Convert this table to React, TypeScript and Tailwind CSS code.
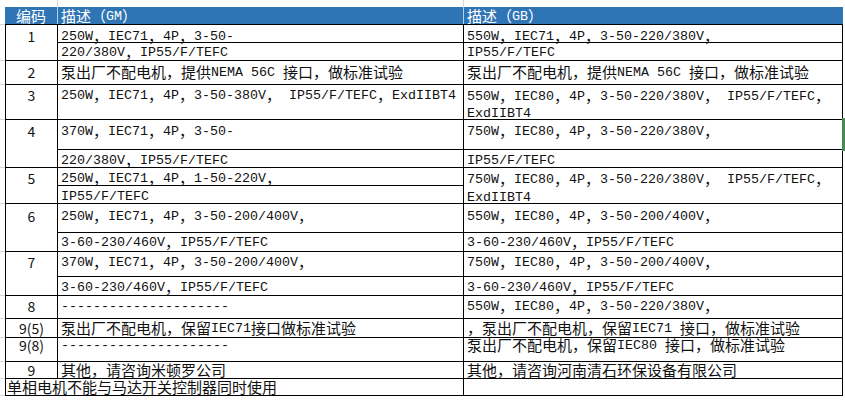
import React from "react";

// SimSun-like mix: CJK glyphs 15px wide, latin half-width (8px advance)
function Mixed({ text }: { text: string }) {
  const parts = text.split(/([\x20-\x7e]+)/);
  return (
    <>
      {parts.map((p, i) =>
        /^[\x20-\x7e]+$/.test(p) ? (
          <span
            key={i}
            className="align-[2px] font-['Liberation_Mono',monospace] text-[13.33px] leading-none whitespace-pre"
          >
            {p}
          </span>
        ) : (
          <span key={i}>{p}</span>
        )
      )}
    </>
  );
}

type Row = {
  no: string;
  h: string;
  pt: string;
  left: string[];
  right: string[];
  splitL?: string;
  splitR?: string;
  pt2?: string;
  lh?: string;
};

const dash = "---------------------";

const rows: Row[] = [
  {
    no: "1",
    h: "h-[36px]",
    pt: "pt-[3px]",
    left: ["250W，IEC71，4P，3-50-", "220/380V，IP55/F/TEFC"],
    right: ["550W，IEC71，4P，3-50-220/380V，", "IP55/F/TEFC"],
    splitL: "h-[18px]",
    splitR: "h-[18px]",
    pt2: "pt-px",
  },
  {
    no: "2",
    h: "h-[24px]",
    pt: "pt-[3px]",
    left: ["泵出厂不配电机，提供NEMA 56C 接口，做标准试验"],
    right: ["泵出厂不配电机，提供NEMA 56C 接口，做标准试验"],
  },
  {
    no: "3",
    h: "h-[35px]",
    pt: "pt-[2px]",
    left: ["250W，IEC71，4P，3-50-380V， IP55/F/TEFC，ExdIIBT4"],
    right: ["550W，IEC80，4P，3-50-220/380V， IP55/F/TEFC，", "ExdIIBT4"],
    lh: "leading-[17px]",
  },
  {
    no: "4",
    h: "h-[48px]",
    pt: "pt-[3px]",
    left: ["370W，IEC71，4P，3-50-", "220/380V，IP55/F/TEFC"],
    right: ["750W，IEC80，4P，3-50-220/380V，", "IP55/F/TEFC"],
    splitL: "h-[30px]",
    splitR: "h-[30px]",
    pt2: "pt-[2px]",
  },
  {
    no: "5",
    h: "h-[36px]",
    pt: "pt-[2px]",
    left: ["250W，IEC71，4P，1-50-220V，", "IP55/F/TEFC"],
    right: ["750W，IEC80，4P，3-50-220/380V， IP55/F/TEFC，", "ExdIIBT4"],
    splitL: "h-[18px]",
    pt2: "pt-[2px]",
    lh: "leading-[18px]",
  },
  {
    no: "6",
    h: "h-[48px]",
    pt: "pt-[4px]",
    left: ["250W，IEC71，4P，3-50-200/400V，", "3-60-230/460V，IP55/F/TEFC"],
    right: ["550W，IEC80，4P，3-50-200/400V，", "3-60-230/460V，IP55/F/TEFC"],
    splitL: "h-[29px]",
    splitR: "h-[29px]",
    pt2: "pt-px",
  },
  {
    no: "7",
    h: "h-[44px]",
    pt: "pt-[2px]",
    left: ["370W，IEC71，4P，3-50-200/400V，", "3-60-230/460V，IP55/F/TEFC"],
    right: ["750W，IEC80，4P，3-50-200/400V，", "3-60-230/460V，IP55/F/TEFC"],
    splitL: "h-[25px]",
    splitR: "h-[25px]",
    pt2: "pt-[2px]",
  },
  {
    no: "8",
    h: "h-[23px]",
    pt: "pt-[2px]",
    left: [dash],
    right: ["550W，IEC80，4P，3-50-220/380V，"],
  },
  {
    no: "9(5)",
    h: "h-[19px]",
    pt: "pt-px",
    left: ["泵出厂不配电机，保留IEC71接口做标准试验"],
    right: ["，泵出厂不配电机，保留IEC71 接口，做标准试验"],
  },
  {
    no: "9(8)",
    h: "h-[24px]",
    pt: "-mt-px",
    left: [dash],
    right: ["泵出厂不配电机，保留IEC80 接口，做标准试验"],
  },
  {
    no: "9",
    h: "h-[17px]",
    pt: "pt-0",
    left: ["其他，请咨询米顿罗公司"],
    right: ["其他，请咨询河南清石环保设备有限公司"],
  },
];

function Desc({ lines, split, pt, pt2, lh }: { lines: string[]; split?: string; pt: string; pt2?: string; lh?: string }) {
  if (split) {
    return (
      <div className="flex h-full flex-col">
        <div className={`${split} shrink-0 whitespace-nowrap border-b border-black pl-[3px] ${pt}`}>
          <Mixed text={lines[0]} />
        </div>
        <div className={`flex-1 whitespace-nowrap pl-[3px] ${pt2}`}>
          <Mixed text={lines[1]} />
        </div>
      </div>
    );
  }
  return (
    <div className={`pl-[3px] ${pt} ${lh ?? ""}`}>
      {lines.map((l, i) => (
        <div key={i} className="whitespace-nowrap">
          <Mixed text={l} />
        </div>
      ))}
    </div>
  );
}

export default function App() {
  return (
    <div className="relative h-[401px] w-[845px] overflow-hidden bg-white font-['Noto_Sans_CJK_SC',sans-serif] text-[15px] leading-[16px] text-[#111]">
      {/* gridlines above the table */}
      <div className="flex h-[7px]">
        <div className="w-[58px] border-r border-[#d6d6d6]" />
        <div className="w-[406px] border-r border-[#d6d6d6]" />
      </div>

      {/* header */}
      <div className="flex h-[18px]">
        <div className="w-[5px] border-b border-[#d6d6d6]" />
        <div className="flex border-b border-black bg-[#2f75b5] text-white">
          <div className="w-[53px] border-r border-[#b4cfe8] text-center leading-[17px]">编码</div>
          <div className="w-[406px] border-r border-[#b4cfe8] pl-[3px] leading-[17px]">
            <Mixed text="描述（GM）" />
          </div>
          <div className="w-[379px] pl-[3px] leading-[17px]">
            <Mixed text="描述（GB）" />
          </div>
        </div>
      </div>

      {rows.map((r) => (
        <div key={r.no + r.h} className={`flex ${r.h}`}>
          <div className="w-[5px] border-b border-[#d6d6d6]" />
          <div className="flex border-b border-black">
            <div className={`w-[53px] border-l border-r border-black text-center text-[14px] ${r.pt}`}>{r.no}</div>
            <div className="w-[406px] overflow-hidden border-r border-black">
              <Desc lines={r.left} split={r.splitL} pt={r.pt} pt2={r.pt2} />
            </div>
            <div className="w-[379px] overflow-hidden border-r border-black">
              <Desc lines={r.right} split={r.splitR} pt={r.pt} pt2={r.pt2} lh={r.lh} />
            </div>
          </div>
        </div>
      ))}

      {/* last note row */}
      <div className="flex h-[17px]">
        <div className="w-[5px] border-b border-[#d6d6d6]" />
        <div className="flex border-b border-black">
          <div className="w-[459px] border-l border-r border-black pl-px">单相电机不能与马达开关控制器同时使用</div>
          <div className="w-[379px] border-r border-black" />
        </div>
      </div>

      {/* cell selection edge */}
      <div className="absolute left-[842px] top-[118px] h-[33px] w-[3px] bg-[#3f8f52]" />
    </div>
  );
}
